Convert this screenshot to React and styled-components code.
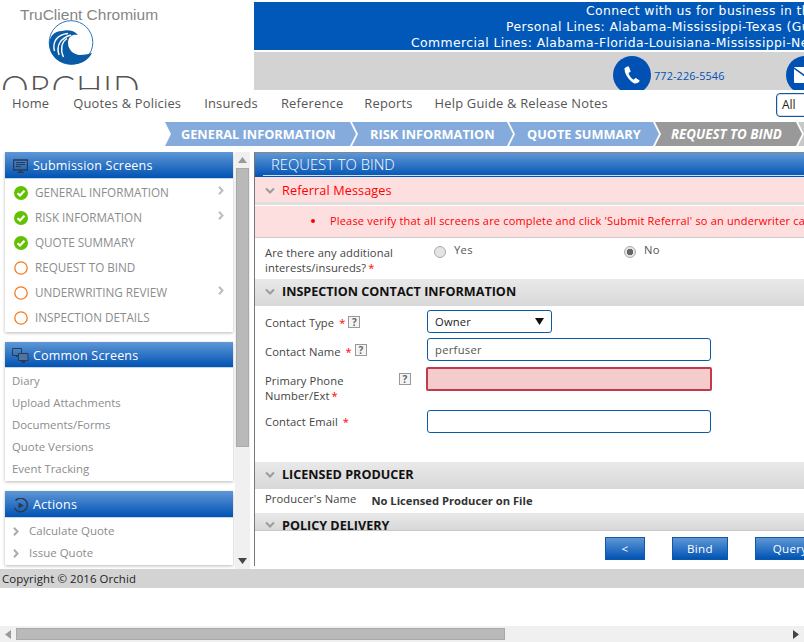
import React from "react";
import styled, { createGlobalStyle } from "styled-components";

const Global = createGlobalStyle`
  html, body { margin: 0; padding: 0; background: #fff; overflow: hidden; }
  * { box-sizing: border-box; }
  body { font-family: "Open Sans", "Liberation Sans", sans-serif; }
`;

const Page = styled.div`
  width: 804px; height: 642px; overflow: hidden; display: flex; flex-direction: column; background: #fff;
`;

/* ---------- header ---------- */
const Header = styled.header`display: flex; height: 90px; flex: none;`;
const Brand = styled.div`
  width: 254px; flex: none; height: 90px; overflow: hidden; display: flex; flex-direction: column; padding-top: 6px;
`;
const ChromeTitle = styled.div`
  font: 300 15.5px/18px "Liberation Sans", sans-serif; color: #868686; margin-left: 20px; height: 14px; white-space: nowrap;
`;
const LogoMark = styled.svg`display: block; margin-left: 48px; flex: none;`;
const BrandName = styled.div`
  font: 300 35px/35px "Lato", sans-serif; color: #555; letter-spacing: 0.8px; margin: 4px 0 0 1px; white-space: nowrap;
`;
const HeaderRight = styled.div`
  flex: 1; min-width: 0; display: flex; flex-direction: column; padding-top: 2px; gap: 2px; overflow: hidden;
`;
const Banner = styled.div`
  height: 48px; background: #0258b8; color: #fff; font: 12.4px/16px "DejaVu Sans", sans-serif; padding-top: 1px;
`;
const BannerLine = styled.div`
  white-space: nowrap; letter-spacing: 0.4px; padding-left: ${(p) => p.$indent}px;
`;
const ContactBar = styled.div`
  height: 38px; background: #d3d3d3; display: flex; align-items: flex-start; padding: 4px 0 0 359px; overflow: hidden;
`;
const ContactCircle = styled.div`
  width: 38px; height: 38px; border-radius: 50%; background: #0150b3; flex: none; display: flex; align-items: center; justify-content: center;
`;
const Phone = styled.div`
  font: 10.8px/14px "Open Sans", sans-serif; color: #0150b3; letter-spacing: 0.15px; margin: 13px 62px 0 3px; white-space: nowrap; width: 70px;
`;

/* ---------- nav ---------- */
const Nav = styled.nav`height: 32px; flex: none; display: flex; align-items: flex-start; padding: 4px 0 0 12px;`;
const NavItem = styled.div`
  font: 12.9px/18px "Open Sans", sans-serif; color: #555; white-space: nowrap; letter-spacing: 0.2px; margin-right: ${(p) => p.$gap}px;
`;
const NavSearch = styled.div`
  margin-left: auto; width: 60px; height: 24px; margin-top: -1px; margin-right: -32px; border: 1px solid #0b5aa8; border-radius: 4px;
  font: 12px/22px "Open Sans", sans-serif; color: #222; padding-left: 5px; box-shadow: inset 0 0 0 1px #ddd;
`;

/* ---------- steps ---------- */
const Steps = styled.div`height: 24px; flex: none; display: flex; padding-left: 165px; margin-bottom: 6px; overflow: hidden;`;
const Step = styled.div`
  flex: none; width: ${(p) => p.$w}px; height: 24px; margin-right: -4px;
  background: ${(p) => (p.$current ? "#999" : p.$after ? "#c8c8c8" : "#84abdb")};
  clip-path: polygon(0 0, calc(100% - 6px) 0, 100% 50%, calc(100% - 6px) 100%, 0 100%, 6px 50%);
  color: #fff; font: ${(p) => (p.$current ? "italic 700 13.3px" : "700 12.75px")}/24px "Open Sans", sans-serif;
  padding-left: ${(p) => p.$pad}px; white-space: nowrap;
`;

/* ---------- main ---------- */
const Main = styled.main`flex: none; height: 417px; display: flex; overflow: hidden;`;
const SideColumn = styled.aside`width: 235px; flex: none; padding-left: 5px; overflow: hidden; height: 417px; display: flex; flex-direction: column; gap: 10px;`;
const Panel = styled.section`width: 228px; flex: none; background: #fff; box-shadow: 0 1px 3px rgba(0,0,0,.28); padding-bottom: ${(p) => p.$pb || 0}px;`;
const PanelHead = styled.div`
  height: ${(p) => p.$h || 27}px; background: linear-gradient(#5f97d6, #0053b4); border-bottom: 1px solid #c9d6e6;
  color: #fff; display: flex; align-items: center; font: 12.5px/24px "Open Sans", sans-serif; letter-spacing: 0.2px;
  padding: 2px 0 0 8px;
`;
const PanelIcon = styled.svg`flex: none; margin: 0 ${(p) => p.$mr ?? 5}px 0 ${(p) => p.$ml ?? 0}px;`;
const StatusItem = styled.div`
  height: 25px; display: flex; align-items: center; padding: 2px 0 0 9px; position: relative;
  font: 11.7px/23px "Open Sans", sans-serif; color: #8c8c8c;
`;
const StatusIcon = styled.svg`flex: none; margin-right: 7px;`;
const ItemArrow = styled.svg`position: absolute; right: 9px; top: 7px;`;
const PlainList = styled.div`padding: 2px 0 1px;`;
const PlainItem = styled.div`height: 22px; padding-left: 7px; font: 11.4px/22px "Open Sans", sans-serif; color: #8c8c8c;`;
const ActionItem = styled.div`height: 22px; padding-left: 8px; display: flex; align-items: center; font: 11.5px/22px "Open Sans", sans-serif; color: #8c8c8c;`;
const ActionMark = styled.svg`flex: none; margin-right: 10px;`;

const ScrollV = styled.div`width: 15px; flex: none; height: 417px; background: #f0f0f0; display: flex; flex-direction: column; align-items: center; margin-right: 4px;`;
const ScrollArrow = styled.div`height: 16px; flex: none; width: 15px; display: flex; align-items: center; justify-content: center;`;
const ScrollThumbV = styled.div`width: 13px; height: 279px; background: #b9b9b9; border: 1px solid #a9a9a9; flex: none;`;
const ScrollSpacer = styled.div`flex: 1;`;

const Content = styled.div`
  width: 700px; flex: none; border-left: 1px solid #777; height: 414px; display: flex; flex-direction: column;
`;
const Scroller = styled.div`height: 379px; flex: none; overflow: hidden; border-bottom: 1px solid #c8c8c8;`;
const TitleBar = styled.div`
  height: 25px; background: linear-gradient(#5f97d6, #0053b4); border-top: 1px solid #888; padding: 0 0 0 8px;
`;
const TitleText = styled.div`
  color: #fff; font: 300 14.8px/22px "Open Sans", sans-serif; border-bottom: 1px solid #cfe0f5; height: 23px; padding-left: 8px;
`;
const ReferralHead = styled.div`
  height: 25px; background: #fedfe0; display: flex; align-items: center; padding: 2px 0 0 9px; color: #f00;
  font: 12.7px/23px "Open Sans", sans-serif; letter-spacing: 0.1px;
`;
const Chevron = styled.svg`flex: none; margin-right: 6px; margin-top: ${(p) => p.$mt || 0}px;`;
const Strip = styled.div`height: 3px; background: #dfdfdf;`;
const ReferralBody = styled.div`
  height: 33px; background: #fedfe0; border-top: 1px solid #fff; border-bottom: 1px solid #ccc; color: #f00;
  font: 11px/29px "Open Sans", sans-serif; letter-spacing: 0.18px; display: flex; align-items: flex-start; white-space: nowrap; padding-left: 56px;
`;
const Bullet = styled.span`width: 4px; height: 4px; border-radius: 50%; background: #f00; margin: 13px 15px 0 0; flex: none;`;
const QuestionRow = styled.div`height: 41px; display: grid; grid-template-columns: 169px 190px 1fr; padding: 7px 0 0 10px;`;
const Label = styled.div`font: 11.2px/15px "Open Sans", sans-serif; color: #444; letter-spacing: 0.1px;`;
const PhoneLabel = styled(Label)`width: 134px;`;
const Req = styled.span`color: #f00; margin-left: 2px;`;
const RadioOpt = styled.div`display: flex; align-items: flex-start; font: 11.2px/10px "Open Sans", sans-serif; color: #555; letter-spacing: 0.3px;`;
const Radio = styled.span`
  width: 12px; height: 12px; border-radius: 50%; flex: none; margin: 1px 8px 0 0; border: 1px solid #aaa;
  background: ${(p) => (p.$on ? "radial-gradient(circle, #666 0 3px, #e4e4e4 3.5px)" : "#e4e4e4")};
`;
const SectionHead = styled.div`
  height: ${(p) => p.$clip ? 17 : 27}px; background: linear-gradient(#e9e9e9, #d8d8d8); display: flex; align-items: ${(p) => (p.$clip ? "flex-start" : "center")};
  padding: ${(p) => (p.$clip ? "3px" : "0")} 0 ${(p) => (p.$clip ? "0" : "1px")} 9px; color: #111; font: 700 12.6px/20px "Open Sans", sans-serif; overflow: hidden; white-space: nowrap;
`;
const Form = styled.div`height: 156px; padding: 4px 0 0 10px; display: flex; flex-direction: column;`;
const FormRow = styled.div`display: grid; grid-template-columns: 162px 1fr; margin-bottom: ${(p) => p.$mb}px;`;
const FieldLabel = styled.div`display: flex; align-items: flex-start; padding-top: ${(p) => p.$pt ?? 5}px; height: ${(p) => p.$h || 23}px;`;
const HelpBox = styled.span`
  width: 12px; height: 12px; border: 1px solid #999; margin-left: ${(p) => p.$ml ?? 3}px; flex: none; color: #666; background: #f4f4f4;
  font: 700 10px/10px "Open Sans", sans-serif; text-align: center; margin-top: ${(p) => p.$mt ?? 1}px;
`;
const SelectBox = styled.div`
  width: 125px; height: 23px; border: 1px solid #0b5aa8; border-radius: 3px; display: flex; align-items: center; justify-content: space-between;
  padding: 0 7px; font: 11.2px/21px "Open Sans", sans-serif; color: #222; letter-spacing: 0.2px;
`;
const TextField = styled.div`
  width: 284px; height: 23px; border: 1px solid #0b5aa8; border-radius: 3px; padding-left: 7px; font: 11.2px/21px "Open Sans", sans-serif; color: #555; letter-spacing: 0.3px;
`;
const ErrorField = styled(TextField)`
  width: 286px; height: 24px; margin-left: -1px; background: #f4cccc; border: 2px solid #c23a4e; border-radius: 2px;
`;
const ProducerRow = styled.div`height: 24px; display: flex; padding: 2px 0 0 10px;`;
const ProducerName = styled.div`font: 700 11.2px/15px "Open Sans", sans-serif; color: #333; margin: 2px 0 0 15px;`;
const ButtonBar = styled.div`display: flex; padding: 6px 0 0 350px; gap: 27px; height: 35px;`;
const Btn = styled.div`
  width: ${(p) => p.$w}px; height: 23px; flex: none; background: linear-gradient(#5f97d6, #0053b4); border: 1px solid #0b5aa8; color: #fff;
  font: 11.6px/21px "Open Sans", sans-serif; text-align: center; letter-spacing: 0.3px;
`;

/* ---------- footer ---------- */
const Footer = styled.footer`
  flex: none; height: 19px; background: #d3d3d3; color: #222; font: 11.4px/19px "Open Sans", sans-serif; padding-left: 2px; letter-spacing: 0.1px;
`;
const Blank = styled.div`flex: 1;`;
const ScrollH = styled.div`height: 16px; flex: none; background: #f0f0f0; display: flex; align-items: center;`;
const ScrollThumbH = styled.div`width: 489px; height: 12px; background: #b9b9b9; border: 1px solid #a9a9a9; flex: none;`;
const HArrow = styled.div`width: 16px; flex: none; height: 16px; display: flex; align-items: center; justify-content: center;`;

/* ---------- drawings ---------- */
const Logo = () => (
  <LogoMark width="46" height="46" viewBox="0 0 46 46">
    <circle cx="23" cy="22.500" r="21.800" fill="none" stroke="#2a78bd" strokeWidth="1" />
    <path fill="#0a5ba6" d="M1.200 25C1 17 6 11 14 11c6-1.500 12-.5 16 4-5-1-10 1-10 8 0 7 6 12 12 12 4 0 8-1 12-2-3.500 7-11 11.500-20 11.500C11 44.500 2 36 1.200 25z" />
    <path fill="none" stroke="#fff" strokeWidth="1.400" d="M6.500 31C4 22 9 14.500 20 13.500M11 35C8 26 12 18 23 15M15.500 37C12 30 13.500 22 19 18.500" />
  </LogoMark>
);
const CheckIcon = () => (
  <StatusIcon width="14" height="14" viewBox="0 0 14 14">
    <circle cx="7" cy="7" r="7" fill="#62c100" />
    <path d="M3.500 7.200 6 9.500 10.500 4.800" fill="none" stroke="#fff" strokeWidth="2.200" />
  </StatusIcon>
);
const RingIcon = () => (
  <StatusIcon width="14" height="14" viewBox="0 0 14 14">
    <circle cx="7" cy="7" r="6.200" fill="#fff" stroke="#f47b20" strokeWidth="1.300" />
  </StatusIcon>
);
const Arrow = () => (
  <ItemArrow width="6" height="9" viewBox="0 0 6 9">
    <path d="M1 .8 4.500 4.500 1 8.200" fill="none" stroke="#bdbdbd" strokeWidth="2" />
  </ItemArrow>
);
const Down = ({ mt }) => (
  <Chevron $mt={mt} width="12" height="8" viewBox="0 0 12 8">
    <path d="M2 1.500 6 5.500 10 1.500" fill="none" stroke="#9c9c9c" strokeWidth="2" />
  </Chevron>
);
const Monitor = () => (
  <PanelIcon width="15" height="15" viewBox="0 0 15 15">
    <path d="M.5 1h14v10H.5z" fill="none" stroke="#2f3a4a" strokeWidth="1.400" />
    <path d="M3 3.500h9M3 5.500h9M3 7.500h5" stroke="#2f3a4a" strokeWidth="1" />
    <path d="M6 11h3v2h2v1H4v-1h2z" fill="#2f3a4a" />
  </PanelIcon>
);
const Monitors = () => (
  <PanelIcon $ml={-1} $mr={4} width="17" height="16" viewBox="0 0 17 16">
    <path d="M.5.500h9v7h-9z" fill="none" stroke="#2f3a4a" />
    <path d="M6.500 5.500h9.500v7H6.500z" fill="#4d74a8" stroke="#2f3a4a" />
    <path d="M9.500 12.500h3.500V15H9.500z" fill="#2f3a4a" />
    <path d="M4 8h2v1H4z" fill="#2f3a4a" />
  </PanelIcon>
);
const PlayRing = () => (
  <PanelIcon width="15" height="15" viewBox="0 0 15 15">
    <path d="M2.500 2.700a6.700 6.700 0 1 1-1 7" fill="none" stroke="#2f3a4a" strokeWidth="1.500" />
    <path d="M5.500 4.500 11 7.500 5.500 10.500z" fill="#2f3a4a" />
  </PanelIcon>
);
const Tri = ({ d, color = "#999", w = 9, h = 6 }) => (
  <svg width={w} height={h} viewBox={`0 0 ${w} ${h}`}><path d={d} fill={color} /></svg>
);
const ActionChevron = () => (
  <ActionMark width="6" height="9" viewBox="0 0 6 9">
    <path d="M1 .8 4.500 4.500 1 8.200" fill="none" stroke="#aaa" strokeWidth="2" />
  </ActionMark>
);

export default function App() {
  return (
    <Page>
      <Global />
      <Header>
        <Brand>
          <ChromeTitle>TruClient Chromium</ChromeTitle>
          <Logo />
          <BrandName>ORCHID</BrandName>
        </Brand>
        <HeaderRight>
          <Banner>
            <BannerLine $indent={332}>Connect with us for business in the following states</BannerLine>
            <BannerLine $indent={252}>Personal Lines: Alabama-Mississippi-Texas (Gulf Coast)</BannerLine>
            <BannerLine $indent={157}>Commercial Lines: Alabama-Florida-Louisiana-Mississippi-New York</BannerLine>
          </Banner>
          <ContactBar>
            <ContactCircle>
              <svg width="20" height="20" viewBox="0 0 20 20">
                <path fill="#fff" d="M5.500 1.500 2.600 3C1.900 8 6.500 15.500 12.500 18.500c1.700.3 3.800-.6 5-2.200.2-.4.100-.8-.2-1l-3.200-2c-.4-.3-.8-.2-1.100.1l-1.300 1.400C9 13.200 7.200 10.500 6.500 8l1.700-1c.4-.2.500-.6.400-1L7 2c-.2-.6-.9-.8-1.500-.5z" />
              </svg>
            </ContactCircle>
            <Phone>772-226-5546</Phone>
            <ContactCircle>
              <svg width="22" height="16" viewBox="0 0 22 16">
                <rect width="22" height="16" rx="1" fill="#fff" />
                <path d="M0 1l11 8 11-8" fill="none" stroke="#0150b3" strokeWidth="1.500" />
              </svg>
            </ContactCircle>
          </ContactBar>
        </HeaderRight>
      </Header>

      <Nav>
        <NavItem $gap={24}>Home</NavItem>
        <NavItem $gap={23}>Quotes &amp; Policies</NavItem>
        <NavItem $gap={23}>Insureds</NavItem>
        <NavItem $gap={21}>Reference</NavItem>
        <NavItem $gap={22}>Reports</NavItem>
        <NavItem $gap={0}>Help Guide &amp; Release Notes</NavItem>
        <NavSearch>All</NavSearch>
      </Nav>

      <Steps>
        <Step $w={191} $pad={16}>GENERAL INFORMATION</Step>
        <Step $w={161} $pad={18}>RISK INFORMATION</Step>
        <Step $w={150} $pad={18}>QUOTE SUMMARY</Step>
        <Step $w={147} $current $pad={16}>REQUEST TO BIND</Step>
        <Step $w={60} $after $pad={14}></Step>
      </Steps>

      <Main>
        <SideColumn>
          <Panel $pb={3}>
            <PanelHead><Monitor />Submission Screens</PanelHead>
            <StatusItem><CheckIcon />GENERAL INFORMATION<Arrow /></StatusItem>
            <StatusItem><CheckIcon />RISK INFORMATION<Arrow /></StatusItem>
            <StatusItem><CheckIcon />QUOTE SUMMARY</StatusItem>
            <StatusItem><RingIcon />REQUEST TO BIND</StatusItem>
            <StatusItem><RingIcon />UNDERWRITING REVIEW<Arrow /></StatusItem>
            <StatusItem><RingIcon />INSPECTION DETAILS</StatusItem>
          </Panel>
          <Panel>
            <PanelHead $h={26}><Monitors />Common Screens</PanelHead>
            <PlainList>
              <PlainItem>Diary</PlainItem>
              <PlainItem>Upload Attachments</PlainItem>
              <PlainItem>Documents/Forms</PlainItem>
              <PlainItem>Quote Versions</PlainItem>
              <PlainItem>Event Tracking</PlainItem>
            </PlainList>
          </Panel>
          <Panel>
            <PanelHead><PlayRing />Actions</PanelHead>
            <PlainList>
              <ActionItem><ActionChevron />Calculate Quote</ActionItem>
              <ActionItem><ActionChevron />Issue Quote</ActionItem>
            </PlainList>
          </Panel>
        </SideColumn>
        <ScrollV>
          <ScrollArrow><Tri d="M4.500 0 9 6H0z" /></ScrollArrow>
          <ScrollThumbV />
          <ScrollSpacer />
          <ScrollArrow><Tri d="M0 0h9L4.500 6z" color="#444" /></ScrollArrow>
        </ScrollV>
        <Content>
          <Scroller>
            <TitleBar><TitleText>REQUEST TO BIND</TitleText></TitleBar>
            <ReferralHead><Down />Referral Messages</ReferralHead>
            <Strip />
            <ReferralBody><Bullet />Please verify that all screens are complete and click 'Submit Referral' so an underwriter can review</ReferralBody>
            <QuestionRow>
              <Label>Are there any additional<br />interests/insureds?<Req>*</Req></Label>
              <RadioOpt><Radio />Yes</RadioOpt>
              <RadioOpt><Radio $on />No</RadioOpt>
            </QuestionRow>
            <SectionHead><Down />INSPECTION CONTACT INFORMATION</SectionHead>
            <Form>
              <FormRow $mb={5}>
                <FieldLabel><Label>Contact Type <Req>*</Req></Label><HelpBox>?</HelpBox></FieldLabel>
                <SelectBox>Owner<Tri d="M0 0h9L4.500 7z" color="#111" h={7} /></SelectBox>
              </FormRow>
              <FormRow $mb={6}>
                <FieldLabel $pt={6}><Label>Contact Name <Req>*</Req></Label><HelpBox $mt={0}>?</HelpBox></FieldLabel>
                <TextField>perfuser</TextField>
              </FormRow>
              <FormRow $mb={5}>
                <FieldLabel $h={38} $pt={6}>
                  <PhoneLabel>Primary Phone<br />Number/Ext<Req>*</Req></PhoneLabel>
                  <HelpBox $ml={0} $mt={0}>?</HelpBox>
                </FieldLabel>
                <ErrorField />
              </FormRow>
              <FormRow $mb={0}>
                <FieldLabel $pt={4}><Label>Contact Email <Req>*</Req></Label></FieldLabel>
                <TextField />
              </FormRow>
            </Form>
            <SectionHead><Down />LICENSED PRODUCER</SectionHead>
            <ProducerRow>
              <Label>Producer's Name</Label>
              <ProducerName>No Licensed Producer on File</ProducerName>
            </ProducerRow>
            <SectionHead $clip><Down mt={5} />POLICY DELIVERY</SectionHead>
          </Scroller>
          <ButtonBar>
            <Btn $w={40}>&lt;</Btn>
            <Btn $w={56}>Bind</Btn>
            <Btn $w={70}>Query</Btn>
          </ButtonBar>
        </Content>
      </Main>

      <Footer>Copyright © 2016 Orchid</Footer>
      <Blank />
      <ScrollH>
        <HArrow><Tri d="M6 0v9L0 4.500z" w={6} h={9} /></HArrow>
        <ScrollThumbH />
        <ScrollSpacer />
        <HArrow><Tri d="M0 0l6 4.500L0 9z" color="#444" w={6} h={9} /></HArrow>
      </ScrollH>
    </Page>
  );
}
